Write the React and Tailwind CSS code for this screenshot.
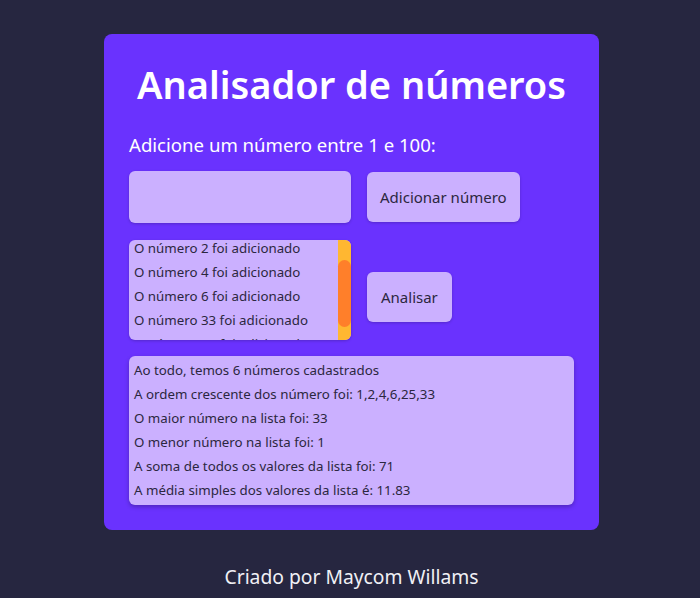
import React from "react";

const added = [1, 2, 4, 6, 33, 25];
const results = [
  "Ao todo, temos 6 números cadastrados",
  "A ordem crescente dos número foi: 1,2,4,6,25,33",
  "O maior número na lista foi: 33",
  "O menor número na lista foi: 1",
  "A soma de todos os valores da lista foi: 71",
  "A média simples dos valores da lista é: 11.83",
];

export default function App() {
  return (
    <div
      className="min-h-[598px] w-full bg-[#262640] flex flex-col items-center pt-[34px] pl-[3px]"
      style={{ fontFamily: '"Noto Sans", sans-serif' }}
    >
      <div className="w-[495px] rounded-lg bg-[#6a32fe] px-[25px] pt-[24px] pb-[25px]">
        <h1 className="text-center text-white text-[38px] leading-[52px] font-semibold">
          Analisador de números
        </h1>
        <p className="mt-[23px] text-white text-[18.6px] leading-[24px]">
          Adicione um número entre 1 e 100:
        </p>
        <div className="mt-[14px] flex items-center gap-[16px]">
          <div className="w-[222px] h-[52px] rounded-md bg-[#cbb0ff] shadow-[0_1px_3px_rgba(0,0,0,0.2)]" />
          <button className="h-[50px] px-[13px] rounded-md bg-[#cbb0ff] text-[#2b2740] text-[15px] shadow-[0_1px_3px_rgba(0,0,0,0.2)]">
            Adicionar número
          </button>
        </div>
        <div className="mt-[17px] flex items-start gap-[16px]">
          <div className="w-[222px] h-[100px] rounded-md bg-[#cbb0ff] overflow-hidden flex shadow-[0_1px_3px_rgba(0,0,0,0.2)]">
            <div className="flex-1 overflow-hidden pl-[5px]">
              <div className="mt-[-28px]">
                {added.map((n) => (
                  <div key={n} className="h-[24px] leading-[24px] text-[13.3px] text-[#2b2740] whitespace-nowrap">
                    O número {n} foi adicionado
                  </div>
                ))}
              </div>
            </div>
            <div className="w-[13px] h-full bg-[#ffb731] flex flex-col pt-[20px]">
              <div className="h-[67px] w-full rounded-full bg-[#ff7f2a]" />
            </div>
          </div>
          <button className="mt-[32px] h-[50px] px-[14px] rounded-md bg-[#cbb0ff] text-[#2b2740] text-[15px] shadow-[0_1px_3px_rgba(0,0,0,0.2)]">
            Analisar
          </button>
        </div>
        <div className="mt-[16px] w-[445px] rounded-md bg-[#cbb0ff] pl-[5px] pt-[2px] pb-[3px] shadow-[0_2px_4px_rgba(0,0,0,0.25)]">
          {results.map((r) => (
            <div key={r} className="h-[24px] leading-[24px] text-[13.3px] text-[#2b2740] whitespace-nowrap">
              {r}
            </div>
          ))}
        </div>
      </div>
      <p className="mt-[35px] text-[#f0f0f5] text-[19.3px] leading-[24px]">
        Criado por Maycom Willams
      </p>
    </div>
  );
}
